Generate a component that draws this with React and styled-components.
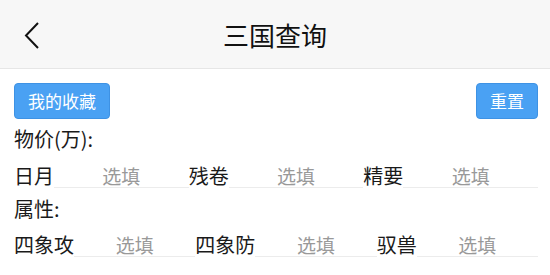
import { Fragment } from "react";
import styled, { createGlobalStyle } from "styled-components";

const GlobalStyle = createGlobalStyle`
  html, body {
    margin: 0;
    padding: 0;
    background: #fff;
    font-family: "Noto Sans CJK SC", "Noto Sans", sans-serif;
  }
`;

const Page = styled.div`
  width: 550px;
  height: 275px;
  overflow: hidden;
  background: #fff;
`;

const Header = styled.div`
  height: 68px;
  background: #f7f7f7;
  border-bottom: 1px solid #e6e6e6;
  display: flex;
  align-items: center;
  justify-content: center;
  position: relative;
`;

const BackButton = styled.div`
  position: absolute;
  left: 22px;
  top: 20px;
  width: 20px;
  height: 30px;
`;

const Title = styled.h1`
  margin: 0;
  font-size: 26px;
  font-weight: 400;
  color: #111;
`;

const Content = styled.div`
  padding: 14px 12px 0 14px;
`;

const ButtonBar = styled.div`
  display: flex;
  justify-content: space-between;
`;

const Button = styled.button`
  height: 36px;
  padding: 0 13px;
  border: 1px solid #3e92e4;
  border-radius: 4px;
  background: #4aa1f3;
  color: #fff;
  font-family: inherit;
  font-size: 17px;
  line-height: 34px;
  cursor: pointer;
`;

const SectionTitle = styled.div`
  margin-top: ${({ $top }) => $top}px;
  font-size: 20px;
  line-height: 26px;
  color: #1a1a1a;
`;

const FieldRow = styled.div`
  display: flex;
  align-items: center;
  height: 24px;
  margin-top: ${({ $top }) => $top}px;
`;

const Label = styled.span`
  flex: none;
  font-size: 20px;
  line-height: 24px;
  color: #1a1a1a;
`;

const Input = styled.input`
  flex: 1 1 0;
  min-width: 0;
  height: 24px;
  box-sizing: border-box;
  border: none;
  border-bottom: 1px solid #ececec;
  outline: none;
  background: transparent;
  padding: 0;
  font-family: inherit;
  font-size: 19px;
  text-align: center;
  color: #333;

  &::placeholder {
    color: #999;
  }
`;

const priceFields = ["日月", "残卷", "精要"];
const attrFields = ["四象攻", "四象防", "驭兽"];

function Fields({ items, top }) {
  return (
    <FieldRow $top={top}>
      {items.map((name) => (
        <Fragment key={name}>
          <Label>{name}</Label>
          <Input placeholder="选填" />
        </Fragment>
      ))}
    </FieldRow>
  );
}

export default function App() {
  return (
    <Page>
      <GlobalStyle />
      <Header>
        <BackButton>
          <svg width="20" height="30" viewBox="0 0 20 30">
            <polyline
              points="16,3 4,15.5 16,28"
              fill="none"
              stroke="#111"
              strokeWidth="2"
            />
          </svg>
        </BackButton>
        <Title>三国查询</Title>
      </Header>
      <Content>
        <ButtonBar>
          <Button>我的收藏</Button>
          <Button>重置</Button>
        </ButtonBar>
        <SectionTitle $top={7}>物价(万):</SectionTitle>
        <Fields items={priceFields} top={12} />
        <SectionTitle $top={8}>属性:</SectionTitle>
        <Fields items={attrFields} top={11} />
      </Content>
    </Page>
  );
}
